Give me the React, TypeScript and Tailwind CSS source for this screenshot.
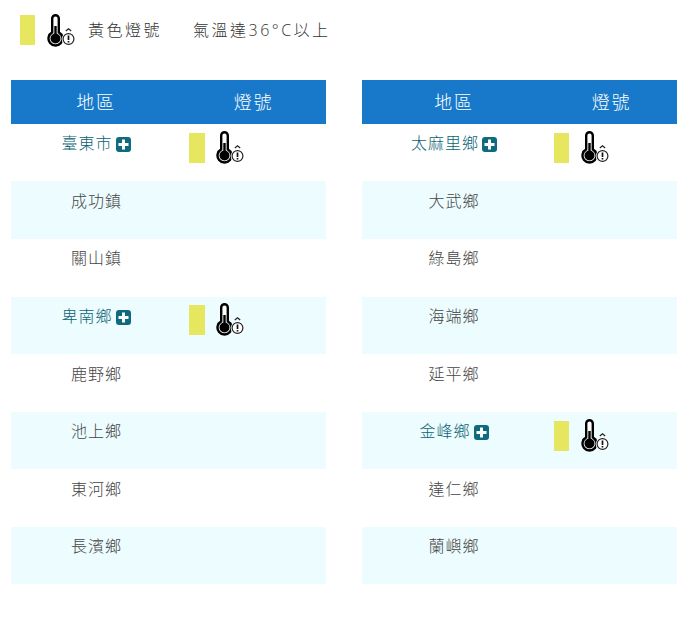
const font = { fontFamily: '"Open Sans", "Noto Sans CJK TC", sans-serif' }

function ThermoIcon() {
  return (
    <svg width="29" height="33" viewBox="0 0 29 33" className="block" fill="none">
      <path d="M5.2 18.4V4.5a3.3 3.3 0 0 1 6.6 0V18.4a7 7 0 1 1-6.6 0Z" stroke="#000" strokeWidth="2.4" fill="#fff" strokeLinejoin="round" />
      <circle cx="8.5" cy="24.5" r="5" fill="#000" />
      <rect x="7.3" y="12" width="2.4" height="9" fill="#000" />
      <circle cx="21.5" cy="25" r="6.8" fill="#fff" />
      <circle cx="21.5" cy="25" r="5.4" fill="#fff" stroke="#222" strokeWidth="1.2" />
      <path d="M21.5 21.5v4.4M21.5 27v1.5" stroke="#111" strokeWidth="1.7" />
      <path d="M18.8 17l2.7-2.3 2.7 2.3" stroke="#222" strokeWidth="1.2" />
    </svg>
  )
}

function Plus() {
  return (
    <span className="inline-flex w-[15px] h-[15px] rounded-[3px] bg-[#0e6b7e] items-center justify-center ml-[3px] align-[-1px]">
      <svg width="11" height="11" viewBox="0 0 11 11">
        <path d="M5.5 0.5v10M0.5 5.5h10" stroke="#fff" strokeWidth="3" />
      </svg>
    </span>
  )
}

function Signal({ narrow }: { narrow?: boolean }) {
  return (
    <div className="flex items-start">
      <div className={narrow ? 'w-[15px] h-[30px] bg-[#e6e65f]' : 'w-[16px] h-[30px] bg-[#e6e65f]'} />
      <div className={narrow ? 'ml-[12px] -mt-[2px]' : 'ml-[11px] -mt-[2px]'}>
        <ThermoIcon />
      </div>
    </div>
  )
}

interface Row {
  name: string
  alert?: boolean
}

const left: Row[] = [
  { name: '臺東市', alert: true },
  { name: '成功鎮' },
  { name: '關山鎮' },
  { name: '卑南鄉', alert: true },
  { name: '鹿野鄉' },
  { name: '池上鄉' },
  { name: '東河鄉' },
  { name: '長濱鄉' },
]

const right: Row[] = [
  { name: '太麻里鄉', alert: true },
  { name: '大武鄉' },
  { name: '綠島鄉' },
  { name: '海端鄉' },
  { name: '延平鄉' },
  { name: '金峰鄉', alert: true },
  { name: '達仁鄉' },
  { name: '蘭嶼鄉' },
]

const rowHeights = ['h-[57px]', 'h-[58px]', 'h-[58px]', 'h-[57px]', 'h-[58px]', 'h-[57px]', 'h-[58px]', 'h-[57px]']
const textTops = ['pt-[7px]', 'pt-[8px]', 'pt-[7px]', 'pt-[7px]', 'pt-[8px]', 'pt-[7px]', 'pt-[8px]', 'pt-[7px]']

function AreaTable({ rows, first, isRight }: { rows: Row[]; first: string; isRight?: boolean }) {
  return (
    <div className="w-[315px]">
      <div className={`grid ${first} h-[44px] bg-[#1879ca] text-white text-[18px] font-light tracking-[1.8px] items-center text-center`}>
        <div>地區</div>
        <div>燈號</div>
      </div>
      {rows.map((row, i) => (
        <div key={row.name} className={`grid ${first} ${rowHeights[i]} ${i % 2 ? 'bg-[#edfcfe]' : 'bg-white'}`}>
          <div className={`text-center ${textTops[i]} text-[16px] font-light leading-[24px] tracking-[1px] ${isRight || row.alert ? '' : 'pl-[1px]'} ${row.alert ? 'text-[#0a6272]' : 'text-[#444444]'}`}>
            {row.name}
            {row.alert && <Plus />}
          </div>
          <div className={`pl-2 ${i === 3 ? 'pt-[8px]' : 'pt-[9px]'}`}>{row.alert && <Signal narrow={isRight} />}</div>
        </div>
      ))}
    </div>
  )
}

export default function App() {
  return (
    <div className="w-[691px] h-[619px] bg-white overflow-hidden" style={font}>
      <div className="flex items-start pl-5 pt-[15px] h-[80px]">
        <div className="w-[15px] h-[30px] bg-[#e6e65f]" />
        <div className="ml-3 -mt-[1px]">
          <ThermoIcon />
        </div>
        <div className="ml-[12px] flex text-[16px] font-light leading-[30px] tracking-[2.5px] text-[#333333]">
          <span>黃色燈號</span>
          <span className="ml-[31px]">氣溫達36°C以上</span>
        </div>
      </div>
      <div className="flex pl-[11px] gap-[36px]">
        <AreaTable rows={left} first="grid-cols-[170px_145px]" />
        <AreaTable rows={right} first="grid-cols-[184px_131px]" isRight />
      </div>
    </div>
  )
}
